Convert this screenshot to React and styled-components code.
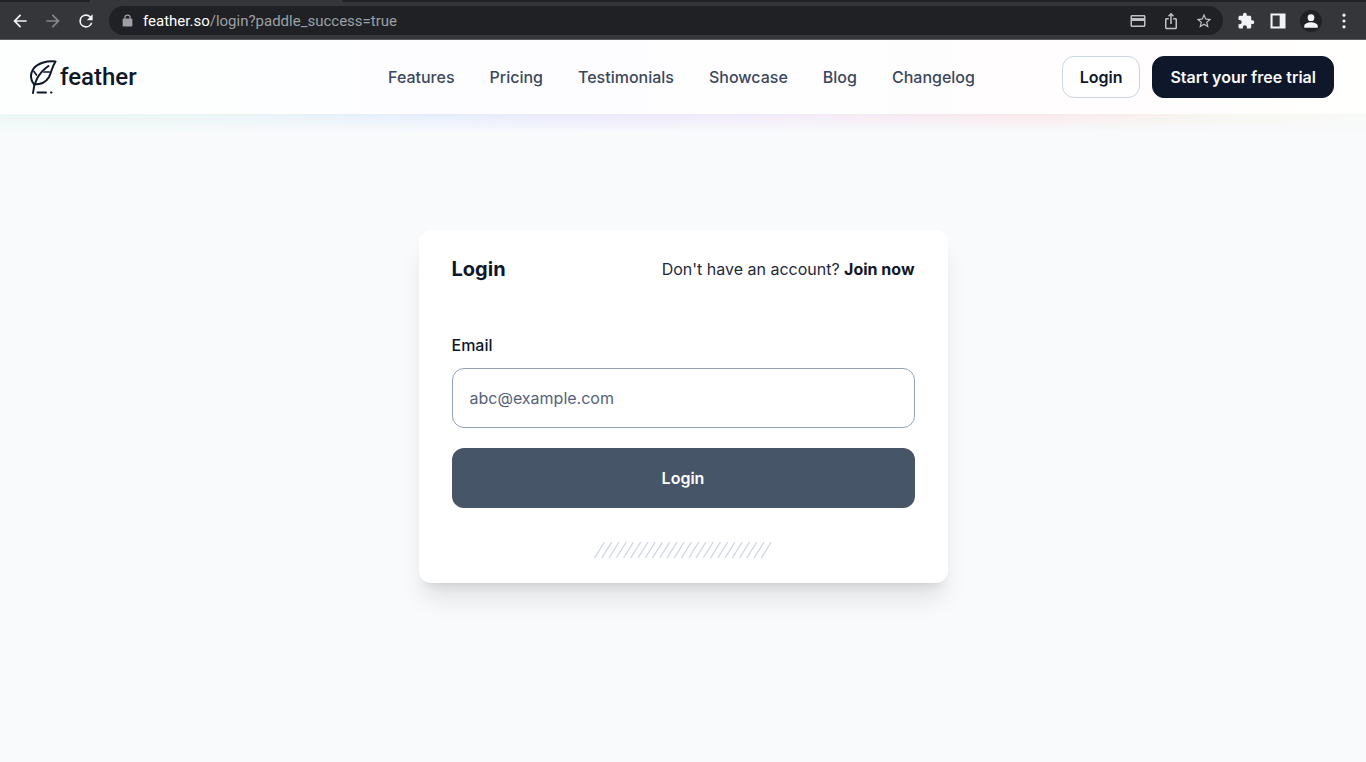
import React from "react";
import styled, { createGlobalStyle } from "styled-components";

const GlobalStyle = createGlobalStyle`
  *, *::before, *::after { box-sizing: border-box; }
  body {
    margin: 0;
    background: #f8fafc;
    color: #0f172a;
    font-family: Inter, "Liberation Sans", sans-serif;
    font-size: 16px;
    line-height: 24px;
  }
  button, input { font: inherit; }
  a { color: inherit; text-decoration: none; }
`;

const Page = styled.div`
  min-height: 100vh;
  display: flex;
  flex-direction: column;
`;

/* Browser toolbar */

const TabEdge = styled.div`
  height: 2px;
  display: flex;
  justify-content: space-between;
  background: #35363a;
`;

const InactiveTabs = styled.span`
  flex: ${(p) => p.$grow || "none"};
  width: ${(p) => p.$width || "auto"};
  background: #202124;
  border-radius: ${(p) => p.$radius};
`;

const Toolbar = styled.div`
  height: 38px;
  display: flex;
  align-items: center;
  gap: 13px;
  padding: 0 12px 0 10px;
  background: #35363a;
  border-bottom: 1px solid #5c5d60;
`;

const ToolGroup = styled.div`
  display: flex;
  align-items: center;
  gap: ${(p) => p.$gap};
`;

const ToolButton = styled.button`
  display: grid;
  place-items: center;
  width: ${(p) => p.$width || "20px"};
  height: 22px;
  padding: 0;
  border: 0;
  border-radius: 11px;
  background: ${(p) => (p.$dark ? "#202124" : "transparent")};
  color: ${(p) => p.$color || "#f1f3f4"};
`;

const AddressBar = styled.div`
  flex: 1;
  height: 29px;
  display: flex;
  align-items: center;
  gap: 9px;
  padding: 0 9px 0 12px;
  border-radius: 15px;
  background: #202124;
  color: #9aa0a6;
`;

const Url = styled.span`
  flex: 1;
  font-family: Roboto, "Liberation Sans", sans-serif;
  font-size: 15px;
  line-height: 20px;
  b { font-weight: 400; color: #ffffff; }
`;

/* Site header */

const Header = styled.header`
  position: relative;
  display: grid;
  grid-template-columns: 1fr auto 1fr;
  align-items: center;
  height: 74px;
  padding: 0 32px 0 29px;
  background: linear-gradient(90deg, #fdfffe, #fdfdff 35%, #fefdff 60%, #fffdfd 80%, #fffffe);

  &::after {
    content: "";
    position: absolute;
    top: 100%;
    left: 0;
    right: 0;
    height: 18px;
    background: linear-gradient(90deg, #eaf7f4, #e9f6f4 12%, #e5edfb 31%, #ede7fb 48%, #f3eaf8 58%, #f9e8ea 76%, #f7f6ef 90%, #f8faf7);
    mask-image: linear-gradient(#000, transparent);
  }
`;

const Brand = styled.a`
  justify-self: start;
  display: flex;
  align-items: center;
  gap: 3px;
  font-family: Roboto, "Liberation Sans", sans-serif;
  font-size: 24px;
  font-weight: 500;
  line-height: 36px;
`;

const Nav = styled.nav`
  display: flex;
  gap: 35px;
`;

const NavLink = styled.a`
  color: #3b485c;
  font-weight: 500;
`;

const Actions = styled.div`
  justify-self: end;
  display: flex;
  gap: 12px;
`;

const ActionLink = styled.a`
  padding: 8px 17px;
  border: 1px solid ${(p) => (p.$primary ? "#0f172a" : "#cbd5e1")};
  border-radius: 12px;
  background: ${(p) => (p.$primary ? "#0f172a" : "#ffffff")};
  color: ${(p) => (p.$primary ? "#f8fafc" : "#0f172a")};
  font-weight: 600;
`;

/* Login card */

const Main = styled.main`
  flex: 1;
  display: flex;
  justify-content: center;
  align-items: flex-start;
  padding: 116px 16px 32px;
`;

const Card = styled.form`
  width: 100%;
  max-width: 529px;
  display: flex;
  flex-direction: column;
  padding: 23px 33px 24px;
  border-radius: 12px;
  background: #ffffff;
  box-shadow: 0 20px 25px -5px rgba(0, 0, 0, 0.1), 0 8px 10px -6px rgba(0, 0, 0, 0.1);
`;

const CardHead = styled.div`
  display: flex;
  justify-content: space-between;
  align-items: center;
  margin-bottom: 48px;
`;

const Title = styled.h1`
  margin: 0;
  font-size: 20px;
  font-weight: 700;
  line-height: 32px;
`;

const JoinText = styled.p`
  margin: 0;
  color: #1e293b;
  a { font-weight: 700; color: #0f172a; }
`;

const Label = styled.label`
  margin-bottom: 11px;
  font-weight: 500;
`;

const EmailInput = styled.input`
  width: 100%;
  height: 60px;
  margin-bottom: 20px;
  padding: 0 17px;
  border: 1px solid #94a3b8;
  border-radius: 12px;
  background: #ffffff;
  color: #0f172a;
  outline: none;
  &::placeholder { color: #56627a; opacity: 1; }
`;

const Submit = styled.button`
  height: 60px;
  margin-bottom: 34px;
  border: 0;
  border-radius: 12px;
  background: #475569;
  color: #ffffff;
  font-weight: 600;
`;

const Hatching = styled.svg`
  display: block;
  align-self: center;
  margin-bottom: 1px;
`;

const Icon = ({ size = 20, children, ...rest }) => (
  <svg width={size} height={size} viewBox="0 0 24 24" fill="currentColor" aria-hidden="true" {...rest}>
    {children}
  </svg>
);

const FeatherMark = () => (
  <svg width="28" height="36" viewBox="0 0 28 36" fill="none" stroke="#0f172a" strokeWidth="2" strokeLinecap="round" strokeLinejoin="round" aria-hidden="true">
    <path d="M26.500 2.500C18 1.800 8 4 4 10.500C1 15.500 1.200 20.500 5 25.500C12 25.500 17.500 22.500 20 18C22.500 13 23 8 26.500 2.500Z" />
    <path d="M4 34C4.500 25 9 14 19.500 7" />
    <path d="M5 12.500L7.500 16M15 13L20.500 13" strokeWidth="1.700" />
    <path d="M8.500 33.500H17M22 33.500H22.500" />
  </svg>
);

const links = ["Features", "Pricing", "Testimonials", "Showcase", "Blog", "Changelog"];

export default function App() {
  return (
    <Page>
      <GlobalStyle />
      <TabEdge>
        <InactiveTabs $width="90px" $radius="0 0 2px 0" />
        <InactiveTabs $grow="0 0 75%" $radius="0 0 0 2px" />
      </TabEdge>
      <Toolbar>
        <ToolGroup $gap="13px">
          <ToolButton aria-label="Back">
            <Icon><path d="M20 11H7.830l5.590-5.590L12 4l-8 8 8 8 1.410-1.410L7.830 13H20v-2z" /></Icon>
          </ToolButton>
          <ToolButton aria-label="Forward" $color="#85878b">
            <Icon><path d="M12 4l-1.410 1.410L16.170 11H4v2h12.170l-5.580 5.590L12 20l8-8z" /></Icon>
          </ToolButton>
          <ToolButton aria-label="Reload">
            <Icon><path d="M17.650 6.350A7.958 7.958 0 0 0 12 4a8 8 0 1 0 7.730 10h-2.080A6 6 0 1 1 12 6c1.660 0 3.140.69 4.220 1.780L13 11h7V4l-2.350 2.350z" /></Icon>
          </ToolButton>
        </ToolGroup>
        <AddressBar>
          <Icon size={13}><path d="M19 8.500h-1V7A6 6 0 0 0 6 7v1.500H5a2 2 0 0 0-2 2V21a2 2 0 0 0 2 2h14a2 2 0 0 0 2-2V10.500a2 2 0 0 0-2-2zM8.200 7a3.800 3.800 0 0 1 7.600 0v1.500H8.200z" /></Icon>
          <Url><b>feather.so</b>/login?paddle_success=true</Url>
          <ToolGroup $gap="13px">
            <ToolButton aria-label="Payment methods" $color="#bdc1c6">
              <Icon size={18}><path d="M20 4H4c-1.110 0-1.990.89-1.990 2L2 18c0 1.110.89 2 2 2h16c1.110 0 2-.89 2-2V6c0-1.110-.89-2-2-2zm0 14H4v-6h16v6zm0-10H4V6h16v2z" /></Icon>
            </ToolButton>
            <ToolButton aria-label="Share" $color="#bdc1c6">
              <Icon size={18}><path d="M16 5l-1.420 1.420-1.590-1.590V16h-1.980V4.830L9.420 6.420 8 5l4-4 4 4zm4 5v11c0 1.100-.9 2-2 2H6c-1.110 0-2-.9-2-2V10c0-1.110.89-2 2-2h3v2H6v11h12V10h-3V8h3c1.100 0 2 .89 2 2z" /></Icon>
            </ToolButton>
            <ToolButton aria-label="Bookmark" $color="#bdc1c6">
              <Icon size={18}><path d="M22 9.240l-7.190-.62L12 2 9.190 8.630 2 9.240l5.460 4.730L5.820 21 12 17.270 18.180 21l-1.630-7.030L22 9.240zM12 15.400l-3.760 2.270 1-4.280-3.320-2.880 4.380-.38L12 6.100l1.710 4.040 4.380.38-3.320 2.880 1 4.280L12 15.400z" /></Icon>
            </ToolButton>
          </ToolGroup>
        </AddressBar>
        <ToolGroup $gap="12px">
          <ToolButton aria-label="Extensions">
            <Icon size={18}><path d="M20.500 11H19V7c0-1.100-.9-2-2-2h-4V3.500a2.500 2.500 0 0 0-5 0V5H4c-1.100 0-1.990.9-1.990 2v3.800H3.500c1.490 0 2.700 1.210 2.700 2.700s-1.210 2.700-2.700 2.700H2V20c0 1.100.9 2 2 2h3.800v-1.500c0-1.490 1.210-2.700 2.700-2.700s2.700 1.210 2.700 2.700V22H17c1.100 0 2-.9 2-2v-4h1.500a2.500 2.500 0 0 0 0-5z" /></Icon>
          </ToolButton>
          <ToolButton aria-label="Side panel">
            <Icon><path d="M3 3h18v18H3zM5.500 5.500v13H14v-13z" fillRule="evenodd" /></Icon>
          </ToolButton>
          <ToolButton aria-label="Profile" $dark $width="22px">
            <Icon size={18}><path d="M12 12a4.500 4.500 0 1 0 0-9 4.500 4.500 0 0 0 0 9zm0 1.500c-3.300 0-9 1.600-9 5V21h18v-2.500c0-3.400-5.700-5-9-5z" /></Icon>
          </ToolButton>
          <ToolButton aria-label="Menu">
            <Icon><circle cx="12" cy="5" r="1.900" /><circle cx="12" cy="12" r="1.900" /><circle cx="12" cy="19" r="1.900" /></Icon>
          </ToolButton>
        </ToolGroup>
      </Toolbar>

      <Header>
        <Brand href="#home"><FeatherMark />feather</Brand>
        <Nav>
          {links.map((name) => (
            <NavLink key={name} href={`#${name.toLowerCase()}`}>{name}</NavLink>
          ))}
        </Nav>
        <Actions>
          <ActionLink href="#login">Login</ActionLink>
          <ActionLink href="#trial" $primary>Start your free trial</ActionLink>
        </Actions>
      </Header>

      <Main>
        <Card onSubmit={(e) => e.preventDefault()}>
          <CardHead>
            <Title>Login</Title>
            <JoinText>Don't have an account? <a href="#join">Join now</a></JoinText>
          </CardHead>
          <Label htmlFor="email">Email</Label>
          <EmailInput id="email" type="email" placeholder="abc@example.com" />
          <Submit type="submit">Login</Submit>
          <Hatching width="178" height="16" viewBox="0 0 178 16" stroke="#cbd5e1" strokeWidth="1.200" aria-hidden="true">
            {Array.from({ length: 24 }, (_, i) => (
              <line key={i} x1={0.5 + i * 7.25} y1="16" x2={10.5 + i * 7.25} y2="0" />
            ))}
          </Hatching>
        </Card>
      </Main>
    </Page>
  );
}
